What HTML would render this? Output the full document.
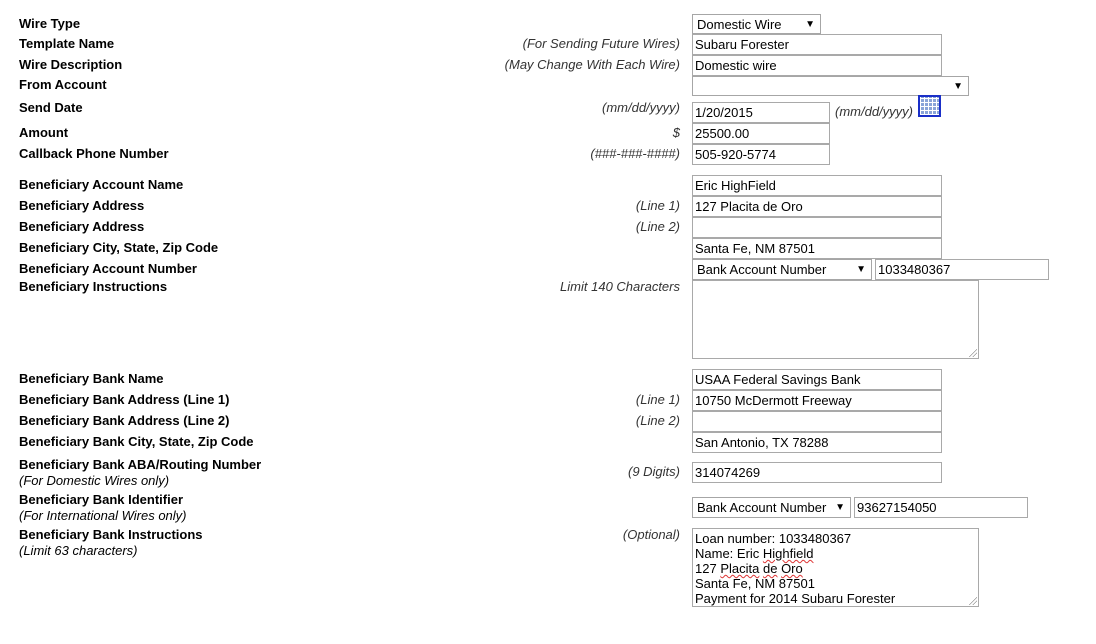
<!DOCTYPE html><html><head><style>
body{margin:0;width:1096px;height:644px;background:#fff;font-family:"Liberation Sans",Arial,sans-serif;font-size:13px;color:#000;position:relative;overflow:hidden}
.l{position:absolute;left:19px;font-weight:bold;line-height:16px;white-space:nowrap}
.l i{font-weight:normal;display:block}
.h{position:absolute;right:416px;font-style:italic;color:#333;line-height:16px;white-space:nowrap}
.b{position:absolute;box-sizing:border-box;border:1px solid #a9a9a9;background:#fff;padding:1px 2px;line-height:17px;white-space:nowrap;overflow:hidden}
.s{border-color:#a6a6a6;padding-left:4px}
.s:after{content:"▼";position:absolute;right:5px;top:1px;font-size:10px}
.t{line-height:15px;padding:2px 2px}
.g{position:absolute;right:1px;bottom:1px;width:8px;height:8px;background:linear-gradient(135deg,transparent 50%,#999 50%,#999 56%,transparent 56%,transparent 70%,#999 70%,#999 76%,transparent 76%)}
u{text-decoration:underline wavy #d33;text-decoration-thickness:1px;text-underline-offset:1px}
</style></head><body>
<div class="l" style="top:16px">Wire Type</div>
<div class="l" style="top:36px">Template Name</div>
<div class="l" style="top:57px">Wire Description</div>
<div class="l" style="top:77px">From Account</div>
<div class="l" style="top:100px">Send Date</div>
<div class="l" style="top:125px">Amount</div>
<div class="l" style="top:146px">Callback Phone Number</div>
<div class="l" style="top:177px">Beneficiary Account Name</div>
<div class="l" style="top:198px">Beneficiary Address</div>
<div class="l" style="top:219px">Beneficiary Address</div>
<div class="l" style="top:240px">Beneficiary City, State, Zip Code</div>
<div class="l" style="top:261px">Beneficiary Account Number</div>
<div class="l" style="top:279px">Beneficiary Instructions</div>
<div class="l" style="top:371px">Beneficiary Bank Name</div>
<div class="l" style="top:392px">Beneficiary Bank Address (Line 1)</div>
<div class="l" style="top:413px">Beneficiary Bank Address (Line 2)</div>
<div class="l" style="top:434px">Beneficiary Bank City, State, Zip Code</div>
<div class="l" style="top:457px">Beneficiary Bank ABA/Routing Number<i>(For Domestic Wires only)</i></div>
<div class="l" style="top:492px">Beneficiary Bank Identifier<i>(For International Wires only)</i></div>
<div class="l" style="top:527px">Beneficiary Bank Instructions<i>(Limit 63 characters)</i></div>

<div class="h" style="top:36px">(For Sending Future Wires)</div>
<div class="h" style="top:57px">(May Change With Each Wire)</div>
<div class="h" style="top:100px">(mm/dd/yyyy)</div>
<div class="h" style="top:125px">$</div>
<div class="h" style="top:146px">(###-###-####)</div>
<div class="h" style="top:198px">(Line 1)</div>
<div class="h" style="top:219px">(Line 2)</div>
<div class="h" style="top:279px">Limit 140 Characters</div>
<div class="h" style="top:392px">(Line 1)</div>
<div class="h" style="top:413px">(Line 2)</div>
<div class="h" style="top:464px">(9 Digits)</div>
<div class="h" style="top:527px">(Optional)</div>

<div class="b s" style="left:692px;top:14px;width:129px;height:20px">Domestic Wire</div>
<div class="b" style="left:692px;top:34px;width:250px;height:21px">Subaru Forester</div>
<div class="b" style="left:692px;top:55px;width:250px;height:21px">Domestic wire</div>
<div class="b s" style="left:692px;top:76px;width:277px;height:20px"></div>
<div class="b" style="left:692px;top:102px;width:138px;height:21px">1/20/2015</div>
<div style="position:absolute;left:835px;top:104px;font-style:italic;color:#333;line-height:16px">(mm/dd/yyyy)</div>
<div style="position:absolute;left:918px;top:95px;width:23px;height:22px;border:2px solid #1a2fc8;box-sizing:border-box;background:repeating-linear-gradient(90deg,#fff 0 1px,transparent 1px 4px),repeating-linear-gradient(0deg,#fff 0 1px,transparent 1px 4px),#8aa4d8"></div>
<div class="b" style="left:692px;top:123px;width:138px;height:21px">25500.00</div>
<div class="b" style="left:692px;top:144px;width:138px;height:21px">505-920-5774</div>
<div class="b" style="left:692px;top:175px;width:250px;height:21px">Eric HighField</div>
<div class="b" style="left:692px;top:196px;width:250px;height:21px">127 Placita de Oro</div>
<div class="b" style="left:692px;top:217px;width:250px;height:21px"></div>
<div class="b" style="left:692px;top:238px;width:250px;height:21px">Santa Fe, NM 87501</div>
<div class="b s" style="left:692px;top:259px;width:180px;height:21px">Bank Account Number</div>
<div class="b" style="left:875px;top:259px;width:174px;height:21px">1033480367</div>
<div class="b" style="left:692px;top:280px;width:287px;height:79px"><span class="g"></span></div>
<div class="b" style="left:692px;top:369px;width:250px;height:21px">USAA Federal Savings Bank</div>
<div class="b" style="left:692px;top:390px;width:250px;height:21px">10750 McDermott Freeway</div>
<div class="b" style="left:692px;top:411px;width:250px;height:21px"></div>
<div class="b" style="left:692px;top:432px;width:250px;height:21px">San Antonio, TX 78288</div>
<div class="b" style="left:692px;top:462px;width:250px;height:21px">314074269</div>
<div class="b s" style="left:692px;top:497px;width:159px;height:21px">Bank Account Number</div>
<div class="b" style="left:854px;top:497px;width:174px;height:21px">93627154050</div>
<div class="b t" style="left:692px;top:528px;width:287px;height:79px">Loan number: 1033480367<br>Name: Eric <u>Highfield</u><br>127 <u>Placita</u> <u>de</u> <u>Oro</u><br>Santa Fe, NM 87501<br>Payment for 2014 Subaru Forester<span class="g"></span></div>
</body></html>
